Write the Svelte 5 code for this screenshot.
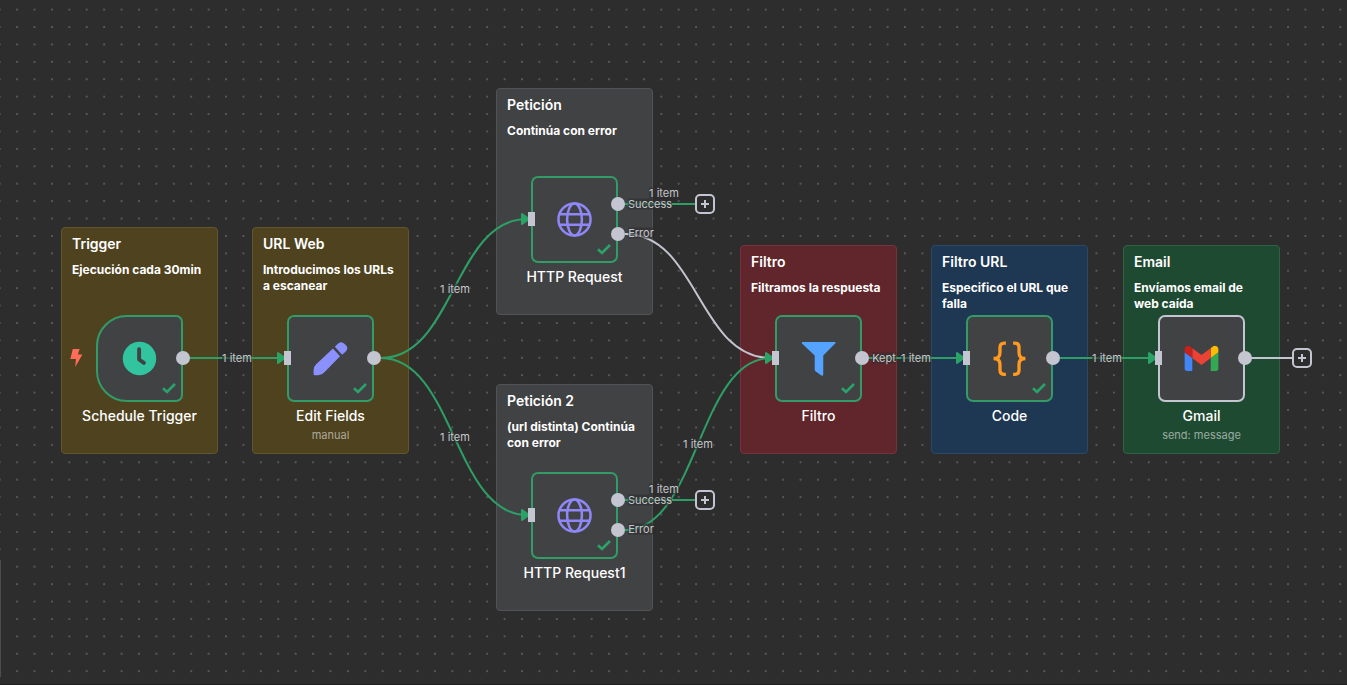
<script>
  const notes = [
    { title: 'Trigger', body: 'Ejecución cada 30min', tone: 'gold', x: 61, y: 227, h: 227 },
    { title: 'URL Web', body: 'Introducimos los URLs a escanear', tone: 'gold', x: 252, y: 227, h: 227 },
    { title: 'Petición', body: 'Continúa con error', tone: 'gray', x: 496, y: 88, h: 227 },
    { title: 'Petición 2', body: '(url distinta) Continúa con error', tone: 'gray', x: 496, y: 384, h: 227 },
    { title: 'Filtro', body: 'Filtramos la respuesta', tone: 'red', x: 740, y: 245, h: 209 },
    { title: 'Filtro URL', body: 'Especifico el URL que falla', tone: 'blue', x: 931, y: 245, h: 209 },
    { title: 'Email', body: 'Envíamos email de web caída', tone: 'green', x: 1123, y: 245, h: 209 },
  ];

  const nodes = [
    { name: 'Schedule Trigger', icon: 'clock', x: 96, y: 315, trigger: true, done: true, outs: [43] },
    { name: 'Edit Fields', sub: 'manual', icon: 'pen', x: 287, y: 315, done: true, outs: [43] },
    { name: 'HTTP Request', icon: 'globe', x: 531, y: 176, done: true, outs: [28, 58] },
    { name: 'HTTP Request1', icon: 'globe', x: 531, y: 472, done: true, outs: [28, 58] },
    { name: 'Filtro', icon: 'funnel', x: 775, y: 315, done: true, outs: [43] },
    { name: 'Code', icon: 'braces', x: 966, y: 315, done: true, outs: [43] },
    { name: 'Gmail', sub: 'send: message', icon: 'gmail', x: 1158, y: 315, done: false, outs: [43] },
  ];

  const edges = [
    { d: 'M625 234C698 234 698 358 771 358', plain: true },
    { d: 'M189 358H280' },
    { d: 'M381 358C454 358 454 219 527 219' },
    { d: 'M381 358C454 358 454 515 527 515' },
    { d: 'M625 530C698 530 698 358 771 358' },
    { d: 'M868 358H960' },
    { d: 'M1060 358H1151' },
    { d: 'M624 204H696' },
    { d: 'M624 500H696' },
    { d: 'M1251 358H1293', plain: true },
  ];

  const arrows = [[285, 358], [529, 219], [529, 515], [773, 358], [964, 358], [1156, 358]];

  const labels = [
    { text: '1 item', x: 237, y: 358 },
    { text: '1 item', x: 455, y: 289 },
    { text: '1 item', x: 455, y: 437 },
    { text: '1 item', x: 664, y: 193 },
    { text: '1 item', x: 664, y: 489 },
    { text: '1 item', x: 698, y: 444 },
    { text: '1 item', x: 916, y: 358 },
    { text: '1 item', x: 1107, y: 358 },
    { text: 'Success', x: 650, y: 204 },
    { text: 'Error', x: 641, y: 233 },
    { text: 'Success', x: 650, y: 500 },
    { text: 'Error', x: 641, y: 529 },
    { text: 'Kept', x: 884, y: 358 },
  ];

  const adders = [[705, 204], [705, 500], [1302, 358]];
</script>

<main class="canvas">
  <svg class="layer" aria-hidden="true">
    <defs>
      <pattern id="dots" width="20" height="20" patternUnits="userSpaceOnUse" patternTransform="translate(8.4 0.9) scale(0.8705)">
        <circle cx="10" cy="10" r="0.8" fill="#97989b" />
      </pattern>
    </defs>
    <rect width="100%" height="100%" fill="url(#dots)" />
  </svg>

  {#each notes as n}
    <section class="note {n.tone}" style="left:{n.x}px;top:{n.y}px;height:{n.h}px">
      <h2>{n.title}</h2>
      <p>{n.body}</p>
    </section>
  {/each}

  <svg class="layer" aria-hidden="true">
    {#each edges as e}
      <path class="edge" class:plain={e.plain} d={e.d} />
    {/each}
    {#each arrows as [x, y]}
      <path class="arrow" d="M{x} {y}l-7 -5v10z" />
    {/each}
    <path d="M72.8 349H79.6L77.9 354.6H82.4L75.2 367L76 359H70.3Z" fill="#ff6d5a" />
  </svg>

  {#each labels as l}
    <span class="label" style="left:{l.x}px;top:{l.y}px">{l.text}</span>
  {/each}

  {#each nodes as n}
    <article class="node" style="left:{n.x}px;top:{n.y}px">
      <div class="box" class:trigger={n.trigger} class:done={n.done}>
        <svg class="icon" viewBox="0 0 36 36" aria-hidden="true">
          {#if n.icon === 'clock'}
            <circle cx="18" cy="18" r="17.2" fill="#31c49f" />
            <path d="M17.6 8.5V19L22.5 22.5" fill="none" stroke="#414244" stroke-width="4" stroke-linecap="round" stroke-linejoin="round" />
          {:else if n.icon === 'pen'}
            <g fill="#8b90ff">
              <path d="M20.5 7.7L27.8 15.7L12 31.8Q9.5 35 5.5 35.2H1.6Q.6 35.2 .6 34.2V30Q.8 26.2 3.3 24Z" />
              <path d="M22.5 5.8L25.3 3Q28.8 -.5 32.3 2.8L33.6 4.2Q37 7.5 33.5 11L29.9 14.1Z" />
            </g>
          {:else if n.icon === 'globe'}
            <g fill="none" stroke="#8f87f7" stroke-width="2.6">
              <circle cx="18" cy="18" r="16.5" />
              <ellipse cx="18" cy="18" rx="7.6" ry="16.5" />
              <path d="M3 12.6H33M3 23.4H33" />
            </g>
          {:else if n.icon === 'funnel'}
            <path d="M1.6 1H34.7Q36.2 1 35.4 2.4L22.9 14.8V34.4Q22.6 36 21 35.6L15.2 31.3Q14.1 30.5 14.1 29.2V15L1 2.5Q.3 1 1.6 1Z" fill="#54a3ff" />
          {:else if n.icon === 'braces'}
            <path d="M14.3 2.1H12.7Q8.2 2.1 8.2 6.6V12Q8.2 18 1.6 18Q8.2 18 8.2 24V29.8Q8.2 34.3 12.7 34.3H14.3M21.7 2.1H23.3Q27.8 2.1 27.8 6.6V12Q27.8 18 34.4 18Q27.8 18 27.8 24V29.8Q27.8 34.3 23.3 34.3H21.7" fill="none" stroke="#ff9922" stroke-width="3.4" />
          {:else}
            <svg x="0" y="5" width="36" height="26" viewBox="52 42 88 66">
              <path fill="#4285f4" d="M58 108h14V74L52 59v43c0 3.32 2.69 6 6 6" />
              <path fill="#34a853" d="M120 108h14c3.32 0 6-2.69 6-6V59l-20 15" />
              <path fill="#fbbc04" d="M120 48v26l20-15v-8c0-7.42-8.47-11.65-14.4-7.2" />
              <path fill="#ea4335" d="M72 74V48l24 18 24-18v26L96 92" />
              <path fill="#c5221f" d="M52 51v8l20 15V48l-5.6-4.2c-5.94-4.45-14.4-.22-14.4 7.2" />
            </svg>
          {/if}
        </svg>
        {#if n.done}
          <svg class="check" viewBox="0 0 16 12" aria-hidden="true"><path d="M2 6.2L6 10L14 2" /></svg>
        {/if}
        {#if !n.trigger}<i class="input"></i>{/if}
        {#each n.outs as o}<i class="output" style="top:{o}px"></i>{/each}
      </div>
      <h3>{n.name}</h3>
      {#if n.sub}<small>{n.sub}</small>{/if}
    </article>
  {/each}

  {#each adders as [x, y]}
    <button class="add" type="button" aria-label="+" style="left:{x}px;top:{y}px">
      <svg viewBox="0 0 16 16" aria-hidden="true"><path d="M8 4V12M4 8H12" /></svg>
    </button>
  {/each}
  <i class="handle"></i>
</main>

<style>
  :global(body) {
    margin: 0;
    background: #2d2d2e;
  }
  .canvas {
    position: relative;
    min-height: 100vh;
    overflow: hidden;
    box-sizing: border-box;
    border-bottom: 1px solid #202021;
    background: #2d2d2e;
    color: #fff;
    font-family: Inter, sans-serif;
  }
  .layer {
    position: absolute;
    inset: 0;
    width: 100%;
    height: 100%;
  }
  .note {
    position: absolute;
    box-sizing: border-box;
    width: 157px;
    padding: 8px 10px;
    border: 1px solid;
    border-radius: 4px;
  }
  .gold { background: #4f431f; border-color: #62562c; }
  .gray { background: #414244; border-color: #525356; }
  .red { background: #61262c; border-color: #77333b; }
  .blue { background: #1e3752; border-color: #2b4867; }
  .green { background: #1f4a32; border-color: #2f6144; }
  h2,
  h3,
  p {
    margin: 0;
  }
  h2 {
    font-size: 14px;
    font-weight: 600;
    line-height: 16px;
  }
  p {
    margin-top: 10px;
    font-size: 12px;
    font-weight: 700;
    line-height: 16px;
  }
  .edge {
    fill: none;
    stroke: #2f9e66;
    stroke-width: 2;
  }
  .edge.plain {
    stroke: #c3c5d0;
  }
  .arrow {
    fill: #2aa366;
    stroke: #2aa366;
    stroke-width: 2;
    stroke-linejoin: round;
  }
  .label {
    position: absolute;
    transform: translate(-50%, -50%);
    color: #c6c7cc;
    background: rgba(45, 45, 46, 0.6);
    font-size: 11px;
    line-height: 11px;
    white-space: nowrap;
  }
  .node {
    position: absolute;
    width: 87px;
    display: flex;
    flex-direction: column;
    align-items: center;
    white-space: nowrap;
  }
  .box {
    position: relative;
    box-sizing: border-box;
    width: 87px;
    height: 87px;
    display: grid;
    place-items: center;
    background: #414244;
    border: 2px solid #c3c5d0;
    border-radius: 7px;
  }
  .box.done {
    border-color: #329b67;
  }
  .box.trigger {
    border-radius: 31px 7px 7px 31px;
  }
  .icon {
    width: 35px;
    height: 35px;
  }
  .check {
    position: absolute;
    right: 4px;
    bottom: 6px;
    width: 16px;
    height: 12px;
    fill: none;
    stroke: #2aa36a;
    stroke-width: 2.6;
  }
  .input,
  .output {
    position: absolute;
    background: #c3c5d0;
  }
  .input {
    left: -5px;
    top: 34px;
    width: 7px;
    height: 14px;
  }
  .output {
    left: 78px;
    width: 14px;
    height: 14px;
    margin-top: -9px;
    border-radius: 50%;
  }
  h3 {
    margin-top: 5px;
    font-size: 14px;
    font-weight: 500;
    line-height: 18px;
  }
  small {
    margin-top: 3px;
    color: rgba(255, 255, 255, 0.55);
    font-size: 11px;
    line-height: 14px;
  }
  .add {
    position: absolute;
    transform: translate(-50%, -50%);
    box-sizing: border-box;
    width: 20px;
    height: 20px;
    padding: 0;
    border: 2px solid #c3c5d0;
    border-radius: 5px;
    background: #2d2d2e;
    display: grid;
    place-items: center;
  }
  .add svg {
    width: 16px;
    height: 16px;
    fill: none;
    stroke: #c3c5d0;
    stroke-width: 2;
  }
  .handle {
    position: absolute;
    left: 0;
    bottom: 7px;
    width: 1px;
    height: 117px;
    background: #4c4d4f;
  }
</style>
